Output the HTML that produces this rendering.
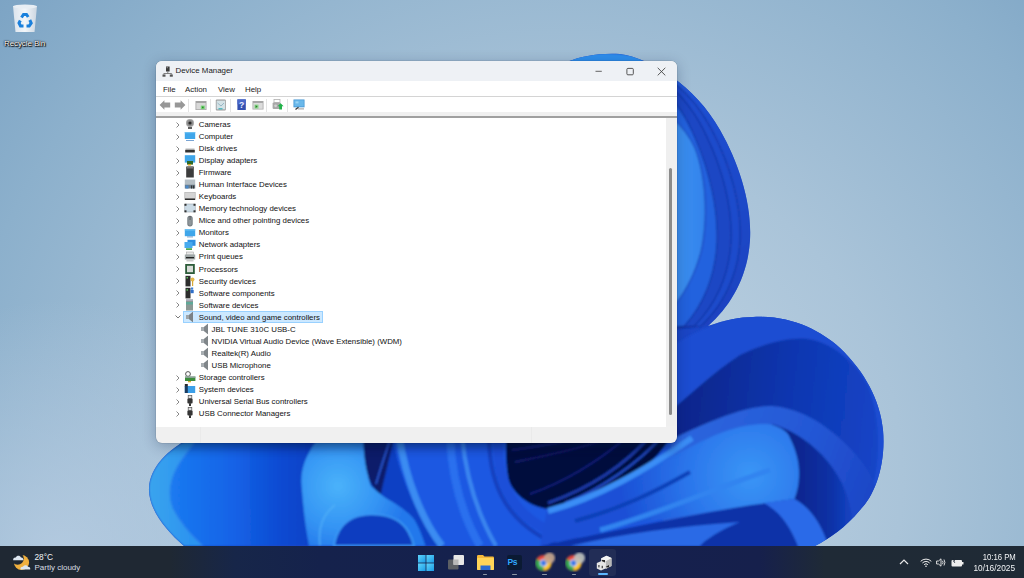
<!DOCTYPE html>
<html><head><meta charset="utf-8">
<style>
*{margin:0;padding:0;box-sizing:border-box}
html,body{width:1024px;height:578px;overflow:hidden}
body{position:relative;font-family:"Liberation Sans",sans-serif;background:#a0bcd4}
#bg{position:absolute;left:0;top:0}
.win{position:absolute;left:156px;top:61px;width:521px;height:382px;background:#f0f0f0;border-radius:6px;overflow:hidden;
box-shadow:0 3px 14px rgba(0,20,60,.28),0 0 0 0.6px rgba(0,0,0,.12)}
.title{position:absolute;left:0;top:0;width:521px;height:20px;background:#eef1f5}
.title .t{position:absolute;left:19.5px;top:0.3px;line-height:20px;font-size:7.9px;color:#1a1a1a}
.menu{position:absolute;left:0;top:20px;width:521px;height:16px;background:#fff;border-bottom:1px solid #d4d4d4}
.menu span{position:absolute;top:1px;line-height:15px;font-size:7.9px;color:#1a1a1a}
.tool{position:absolute;left:0;top:35.6px;width:521px;height:21px;background:linear-gradient(#fff 0,#fff 15.5px,#f0f0f0 15.5px,#f0f0f0 19.2px,#a0a0a0 19.2px)}
.tool svg{position:absolute}
.tsep{position:absolute;top:2px;width:1px;height:13px;background:#e4e4e4}
.tree{position:absolute;left:0;top:56.5px;width:510px;height:309px;background:#fff}
.sb{position:absolute;left:510px;top:56.5px;width:11px;height:308.5px;background:#efefef}
.thumb{position:absolute;left:512.5px;top:107px;width:3px;height:247px;background:#8b8b8b;border-radius:2px}
.row{position:absolute;height:12px;font-size:7.85px;color:#111;white-space:nowrap;line-height:12px}
.ico,.chev{position:absolute}
.sel{position:absolute;background:#cce8ff;border:1px solid #99d1ff}
.tt{position:absolute;font-size:8px;line-height:10px;color:#f2f4f6;white-space:nowrap}
.dot{position:absolute;top:573.5px;width:4.5px;height:1.6px;background:#8e98a6;border-radius:1px}
.taskbar{position:absolute;left:0;top:546px;width:1024px;height:32px;
background:linear-gradient(90deg,#1f2833 0px,#1f2833 170px,#172649 235px,#15224c 320px,#15204e 600px,#16204c 760px,#1f2a36 825px,#1f2a35 1024px)}
</style></head><body>
<svg id="bg" width="1024" height="578" viewBox="0 0 1024 578">
 <defs>
  <radialGradient id="bgG" gradientUnits="userSpaceOnUse" cx="560" cy="480" r="760">
   <stop offset="0" stop-color="#c6d8e6"/><stop offset="0.45" stop-color="#aac4d9"/><stop offset="0.8" stop-color="#8cb0cc"/><stop offset="1" stop-color="#7aa2c3"/>
  </radialGradient>
  <radialGradient id="bgHL" gradientUnits="userSpaceOnUse" cx="60" cy="560" r="260"><stop offset="0" stop-color="#b8cde2" stop-opacity="0.85"/><stop offset="1" stop-color="#b8cde2" stop-opacity="0"/></radialGradient>
  <linearGradient id="gTop" gradientUnits="userSpaceOnUse" x1="600" y1="55" x2="760" y2="300">
   <stop offset="0" stop-color="#2a80ea"/><stop offset="0.3" stop-color="#1f50d2"/><stop offset="1" stop-color="#1a42c0"/>
  </linearGradient>
  <linearGradient id="gLobe2" gradientUnits="userSpaceOnUse" x1="700" y1="320" x2="880" y2="520">
   <stop offset="0" stop-color="#2352d4"/><stop offset="1" stop-color="#1a3bb8"/>
  </linearGradient>
  <linearGradient id="gInner2" gradientUnits="userSpaceOnUse" x1="700" y1="380" x2="880" y2="400"><stop offset="0" stop-color="#0a2890"/><stop offset="0.5" stop-color="#0e36b0"/><stop offset="1" stop-color="#1444c6"/></linearGradient>
  <linearGradient id="gBand2" gradientUnits="userSpaceOnUse" x1="680" y1="430" x2="870" y2="500"><stop offset="0" stop-color="#2d66de"/><stop offset="0.6" stop-color="#2458d6"/><stop offset="1" stop-color="#1d46c6"/></linearGradient>
  <linearGradient id="gShade2" gradientUnits="userSpaceOnUse" x1="790" y1="0" x2="855" y2="0"><stop offset="0" stop-color="#08248a"/><stop offset="0.6" stop-color="#0e30a4"/><stop offset="1" stop-color="#1446c6"/></linearGradient>
  <linearGradient id="gDark2" gradientUnits="userSpaceOnUse" x1="690" y1="430" x2="860" y2="470">
   <stop offset="0" stop-color="#1e4ed0"/><stop offset="0.55" stop-color="#0f2c9c"/><stop offset="0.8" stop-color="#0a2488"/><stop offset="1" stop-color="#1838b4"/>
  </linearGradient>
  <radialGradient id="gLight2" gradientUnits="userSpaceOnUse" cx="750" cy="475" r="130">
   <stop offset="0" stop-color="#3a96f6"/><stop offset="0.45" stop-color="#2c78ec"/><stop offset="1" stop-color="#1a50d6"/>
  </radialGradient>
  <linearGradient id="gLeft" gradientUnits="userSpaceOnUse" x1="150" y1="0" x2="320" y2="0">
   <stop offset="0" stop-color="#2a8af2"/><stop offset="0.15" stop-color="#1a78f0"/><stop offset="0.5" stop-color="#1462e6"/><stop offset="0.8" stop-color="#0c48d0"/><stop offset="1" stop-color="#0a40c4"/>
  </linearGradient>
  <radialGradient id="gCurl" gradientUnits="userSpaceOnUse" cx="338" cy="486" r="70">
   <stop offset="0" stop-color="#4ab2fa"/><stop offset="0.6" stop-color="#3494f4"/><stop offset="1" stop-color="#2478ec"/>
  </radialGradient>
  <clipPath id="sil"><path d="M194 436 L540 436 L540 80 C555 65 580 52 620 54 C650 58 695 85 720 130 C740 165 752 205 750 240 C748 275 732 305 708 326 C725 320 740 317 753 317 C790 315 820 330 840 348 C865 372 880 400 883 430 C886 465 875 495 860 510 C845 528 830 538 815 546 L184 546 C165 530 148 508 149 488 C150 468 166 450 194 436 Z"/></clipPath>
  <linearGradient id="gPet" gradientUnits="userSpaceOnUse" x1="640" y1="0" x2="705" y2="0"><stop offset="0" stop-color="#4aa2f6"/><stop offset="1" stop-color="#3283ec"/></linearGradient>
  <linearGradient id="gShadow" x1="0" y1="0" x2="0" y2="1"><stop offset="0" stop-color="#000830" stop-opacity="0.45"/><stop offset="0.4" stop-color="#000830" stop-opacity="0.2"/><stop offset="1" stop-color="#000830" stop-opacity="0"/></linearGradient>
  <linearGradient id="gRim" gradientUnits="userSpaceOnUse" x1="150" y1="0" x2="190" y2="0"><stop offset="0" stop-color="#3aa4ee"/><stop offset="1" stop-color="#2c94f0"/></linearGradient>
  <filter id="shb" x="-10%" y="-100%" width="120%" height="300%"><feGaussianBlur stdDeviation="4"/></filter>
  <filter id="soft" x="-5%" y="-5%" width="110%" height="110%"><feGaussianBlur stdDeviation="1.2"/></filter>
 </defs>
 <rect width="1024" height="578" fill="url(#bgG)"/>
 <rect width="1024" height="578" fill="url(#bgHL)"/>
 <path d="M194 436 L540 436 L540 80 C555 65 580 52 620 54 C650 58 695 85 720 130 C740 165 752 205 750 240 C748 275 732 305 708 326 C725 320 740 317 753 317 C790 315 820 330 840 348 C865 372 880 400 883 430 C886 465 875 495 860 510 C845 528 830 538 815 546 L184 546 C165 530 148 508 149 488 C150 468 166 450 194 436 Z" fill="#1b46c6"/>
 <g clip-path="url(#sil)"><g filter="url(#soft)">
  <!-- top lobe -->
  <path d="M540 90 C552 68 578 55 602 55 C630 55 660 66 680 81 C700 96 712 113 722 132 C740 165 752 205 750 240 C748 275 732 305 708 326 L540 340 Z" fill="url(#gTop)"/>
  <path d="M540 90 C552 68 578 55 602 55 C630 55 660 66 680 81 C700 96 712 113 722 132 C740 165 752 205 750 240 C748 275 732 305 708 326 L540 340 Z" transform="translate(600 330) scale(0.933 0.99) translate(-600 -330)" fill="#1d4ccc" stroke="#12309c" stroke-width="1.07"/>
  <path d="M540 90 C552 68 578 55 602 55 C630 55 660 66 680 81 C700 96 712 113 722 132 C740 165 752 205 750 240 C748 275 732 305 708 326 L540 340 Z" transform="translate(600 330) scale(0.873 0.98) translate(-600 -330)" fill="#1a46c4" stroke="#12309c" stroke-width="1.15"/>
  <path d="M540 90 C552 68 578 55 602 55 C630 55 660 66 680 81 C700 96 712 113 722 132 C740 165 752 205 750 240 C748 275 732 305 708 326 L540 340 Z" transform="translate(600 330) scale(0.78 0.97) translate(-600 -330)" fill="#2462de" stroke="#12309c" stroke-width="1.28"/>
  <path d="M560 85 C620 82 675 105 695 148 C707 178 708 222 701 252 C695 274 686 290 677 302 C665 316 655 326 645 336 L560 336 Z" fill="url(#gPet)" stroke="#1838b0" stroke-width="1"/>
  <ellipse cx="601" cy="60" rx="42" ry="7" fill="#2e8eec"/>
  <!-- second lobe -->
  <path d="M650 360 C700 325 740 312 770 313 C820 315 870 360 885 420 C895 480 870 520 815 560 L600 560 Z" fill="#1c4ed2"/>
  <path d="M660 420 C690 395 712 373 740 355 C765 343 790 337 808 339 C830 342 855 360 868 386 C880 415 882 460 870 495 C855 530 830 545 800 560 L640 560 Z" fill="url(#gInner2)"/>
  <path d="M660 445 C700 425 745 405 772 406 C795 408 815 418 832 432 C855 450 870 470 877 490 C880 510 870 535 850 560 L660 560 Z" fill="url(#gBand2)"/>
  <path d="M772 424 C800 432 830 455 845 490 C855 515 855 540 850 560 L780 560 Z" fill="url(#gShade2)"/>
  <!-- bottom-left region -->
  <path d="M194 436 C166 450 150 468 149 488 C148 508 165 530 184 546 L480 546 L480 436 Z" fill="url(#gLeft)"/>
  <path d="M194 436 C166 450 150 468 149 488 C148 508 165 530 184 546 L203 546 C192 536 180 522 173 508 C168 495 170 480 178 466 C184 456 190 448 200 436 Z" fill="url(#gRim)"/>
  <path d="M200 436 C190 448 184 456 178 466 C170 480 168 495 173 508 C180 522 192 536 203 546" stroke="#2a80ec" stroke-width="1.2" fill="none"/>
  <path d="M315 443 C306 455 300 470 301.6 486 C303 505 305 525 309 546 L425.6 546 C422 535 418 525 414 519 C408 512 400 507 398.5 505.8 C390 500 385 498 383 496 C375 490 371 486 371 486 C368 478 365.5 467 364 436 L320 436 Z" fill="url(#gCurl)"/>
  <path d="M334 546 C336 532 342 521 358 516 C372 512 390 515 400 522 C408 528 412 538 414 546 Z" fill="#0b3cc0" stroke="#3a98f6" stroke-width="2"/>
  <path d="M320 546 C318 530 322 515 335 505" stroke="#58b8fa" stroke-width="1.5" fill="none" opacity="0.7"/>
  <path d="M363 436 L394 436 C390 458 384 478 381 494 C375 490 370 484 368 475 C365 465 364 455 363 436 Z" fill="#071a6a"/>
  <path d="M376 484 C380 470 385 455 390 440" stroke="#2a5ad8" stroke-width="1.6" fill="none"/>
  <path d="M392 436 L672 436 L660 546 L438 546 C420 520 400 480 392 436 Z" fill="#1c58e2"/>
  <path d="M399 436 C406 480 422 520 442 546" stroke="#3a8cf2" stroke-width="7" fill="none"/>
  <path d="M462 436 C466 478 478 515 496 546" stroke="#3a86f0" stroke-width="4" fill="none"/>
  <path d="M450 436 C452 480 462 515 480 546" stroke="#2a70ee" stroke-width="8" fill="none"/>
  <path d="M489 436 C489 490 510 525 560 546" stroke="#123fbe" stroke-width="4" fill="none"/>
  <path d="M498 436 C496 495 520 528 590 546" stroke="#1a50d8" stroke-width="10" fill="none"/>
  <path d="M506 436 L672 436 C665 445 660 455 643 468.5 C620 482 592 496 547 509 C525 505 510 490 508 476 C506 465 506 452 506 436 Z" fill="#06093c"/>
  <path d="M548 503 C590 488 625 465 650 436" stroke="#1a3aa8" stroke-width="3" fill="none"/>
  <path d="M565 503 C600 490 640 462 662 436" stroke="#2048c0" stroke-width="2.5" fill="none"/>
  <path d="M530 494 C570 480 600 460 628 436" stroke="#12268a" stroke-width="1.5" fill="none"/>
  <path d="M515 462 C550 455 590 446 615 436 M512 450 C540 446 570 441 590 436" stroke="#16247a" stroke-width="1.3" fill="none"/>
  <path d="M540 546 C600 533 686 516 751 505 C770 502 785 500 794 499 L810 560 L540 560 Z" fill="#0d30a8"/>
  <path d="M570 546 C620 534 680 526 740 522 C720 530 705 540 700 546 Z" fill="#2a6ae6"/>
  <path d="M547 509 C580 500 600 492 620 482 C640 472 652 466 665 460 C690 447 710 436 730 429.7 C750 424 765 423 773 425 C782 428 788 432 790 438 C796 450 799 462 799 473 C799 485 797 492 794.5 499 C780 501 765 503 751 505 C720 510 700 513 686.5 516 C650 520 620 526 600 533 C580 536 560 540 540 546 Z" fill="url(#gLight2)"/>
  <path d="M548 511 C600 497 645 470 692 438" stroke="#3a8ef6" stroke-width="6" fill="none"/>
  <path d="M575 521 C620 509 655 492 690 472" stroke="#1040b8" stroke-width="4" fill="none"/>
  <path d="M600 530 C655 515 705 492 770 470" stroke="#3184f0" stroke-width="5" fill="none"/>
  <path d="M764 503 C780 512 792 526 803 560 L832 560 C826 530 812 508 794.5 499 Z" fill="#2a6ae8"/>
 </g>
  <rect x="160" y="432" width="513" height="16" fill="#000a30" opacity="0.35" filter="url(#shb)"/>
 </g>
</svg>

<div class="win">
 <div class="title"><svg style="position:absolute;left:5.5px;top:4.5px" width="11" height="11" viewBox="0 0 11 11"><rect x="4" y="0.5" width="3.6" height="5" fill="#3a3a3a"/><rect x="4.6" y="1.2" width="1.2" height="1" fill="#aaa"/><path d="M5.8 5.5 L5.8 7.5 M1.8 7.5 L9.6 7.5 M1.8 7.5 L1.8 8.5 M9.6 7.5 L9.6 8.5" stroke="#666" stroke-width="0.8" fill="none"/><rect x="0.5" y="8.5" width="3" height="2.2" fill="#555"/><rect x="7.8" y="8.5" width="3" height="2.2" fill="#555"/></svg><span class="t">Device Manager</span><svg style="position:absolute;left:436px;top:6px" width="80" height="10" viewBox="0 0 80 10"><path d="M3.5 4.3 L9.8 4.3" stroke="#555" stroke-width="0.9"/><rect x="34.9" y="1.4" width="6.4" height="6.4" rx="1" fill="none" stroke="#444" stroke-width="0.9"/><path d="M65.7 0.8 L73.3 8.4 M73.3 0.8 L65.7 8.4" stroke="#444" stroke-width="0.9"/></svg></div>
 <div class="menu"><span style="left:7px">File</span><span style="left:29px">Action</span><span style="left:62px">View</span><span style="left:89px">Help</span></div>
 <div class="tool"><svg style="left:2.5px;top:2.6px" width="12" height="12" viewBox="0 0 12 12"><path d="M0.6 6 L5.4 1.2 L5.4 3.4 L11.2 3.4 L11.2 8.6 L5.4 8.6 L5.4 10.8 Z" fill="#979797"/></svg><svg style="left:17.8px;top:2.6px" width="12" height="12" viewBox="0 0 12 12"><path d="M11.4 6 L6.6 1.2 L6.6 3.4 L0.8 3.4 L0.8 8.6 L6.6 8.6 L6.6 10.8 Z" fill="#979797"/></svg><div class="tsep" style="left:32.4px"></div><svg style="left:38.5px;top:3.4px" width="12" height="12" viewBox="0 0 12 12"><rect x="0.5" y="1" width="11" height="9" fill="#a4a4a4"/><rect x="1.3" y="3" width="9.4" height="6.3" fill="#d8d8d8"/><rect x="5.8" y="5.6" width="4" height="3.6" fill="#7ad67a"/><rect x="7" y="6.6" width="1.6" height="1.6" fill="#2a8a2a"/></svg><div class="tsep" style="left:53.5px"></div><svg style="left:59.3px;top:2.4px" width="12" height="12" viewBox="0 0 12 12"><rect x="0.8" y="0.5" width="10" height="11" rx="1" fill="#9a9a9a"/><rect x="1.6" y="1.6" width="8.4" height="8.8" fill="#d4e2e6"/><path d="M2.5 4 L6 7 L9 4" stroke="#8ab" stroke-width="0.8" fill="none"/><rect x="3.5" y="9.2" width="4" height="1.2" fill="#3ab0b8"/></svg><div class="tsep" style="left:74.2px"></div><svg style="left:80px;top:2.4px" width="12" height="12" viewBox="0 0 12 12"><rect x="1.4" y="0.4" width="8.4" height="10.6" fill="#3350b0"/><rect x="1.4" y="0.4" width="8.4" height="5" fill="#4a68c8"/><text x="5.6" y="8.6" font-size="8.5" font-family="Liberation Sans" font-weight="bold" fill="#e8ecff" text-anchor="middle">?</text></svg><svg style="left:95.5px;top:3.3px" width="12" height="12" viewBox="0 0 12 12"><rect x="0.5" y="1" width="11" height="8.5" fill="#a8a8a8"/><rect x="1.3" y="3" width="9.4" height="5.8" fill="#dcdcdc"/><rect x="2.5" y="4.6" width="4" height="4" fill="#8ad68a"/><path d="M3.6 5.2 L5.6 6.6 L3.6 8 Z" fill="#2a7a2a"/></svg><div class="tsep" style="left:110.4px"></div><svg style="left:116px;top:2.8px" width="12" height="12" viewBox="0 0 12 12"><rect x="2" y="0.5" width="6" height="3" fill="none" stroke="#b0b0b0" stroke-width="0.8"/><rect x="0.6" y="3.5" width="8" height="6.5" rx="1" fill="#a8a8a8"/><circle cx="3.6" cy="6.8" r="1.4" fill="#d0d0d0"/><path d="M8.6 4.2 L11.6 7.2 L10 7.2 L10 10.6 L7.2 10.6 L7.2 7.2 L5.6 7.2 Z" fill="#22b24a"/></svg><div class="tsep" style="left:131px"></div><svg style="left:137.2px;top:2.8px" width="12" height="12" viewBox="0 0 12 12"><rect x="0.5" y="0.5" width="11" height="7.8" fill="#3a8fd0"/><rect x="1.2" y="1.2" width="9.6" height="6.4" fill="#6ab8ea"/><rect x="2.5" y="2.4" width="3" height="2" fill="#9ad4f4"/><path d="M5.5 8.3 L2.5 10.6" stroke="#333" stroke-width="1.2"/><rect x="5" y="9.4" width="6" height="1" fill="#999"/></svg></div>
 <div class="tree">
<svg class="chev" style="left:19px;top:3.20px" width="6" height="8" viewBox="0 0 6 8"><path d="M1.5 1.5 L4 4 L1.5 6.5" fill="none" stroke="#7a7a7a" stroke-width="0.9"/></svg><svg class="ico" style="left:28px;top:0.60px" width="12" height="12" viewBox="0 0 12 12"><circle cx="6" cy="5" r="4" fill="#a6a6a6"/><circle cx="6" cy="5" r="3" fill="#8c8c8c"/><circle cx="6" cy="5" r="1.6" fill="#2a2a2a"/><rect x="4" y="9.2" width="4" height="1.6" fill="#3a3a3a"/></svg><div class="row" style="left:42.8px;top:1.40px">Cameras</div>
<svg class="chev" style="left:19px;top:15.25px" width="6" height="8" viewBox="0 0 6 8"><path d="M1.5 1.5 L4 4 L1.5 6.5" fill="none" stroke="#7a7a7a" stroke-width="0.9"/></svg><svg class="ico" style="left:28px;top:12.65px" width="12" height="12" viewBox="0 0 12 12"><rect x="0.8" y="2" width="10.4" height="7" fill="#3fa6ea"/><rect x="0.8" y="2" width="10.4" height="1.2" fill="#6cc0f2"/><rect x="2" y="10" width="8" height="0.9" fill="#6a9ad0"/></svg><div class="row" style="left:42.8px;top:13.45px">Computer</div>
<svg class="chev" style="left:19px;top:27.30px" width="6" height="8" viewBox="0 0 6 8"><path d="M1.5 1.5 L4 4 L1.5 6.5" fill="none" stroke="#7a7a7a" stroke-width="0.9"/></svg><svg class="ico" style="left:28px;top:24.70px" width="12" height="12" viewBox="0 0 12 12"><rect x="1.5" y="6.5" width="9" height="1.6" fill="#b8b8b8"/><rect x="1.2" y="7.9" width="9.6" height="2.6" fill="#333"/></svg><div class="row" style="left:42.8px;top:25.50px">Disk drives</div>
<svg class="chev" style="left:19px;top:39.35px" width="6" height="8" viewBox="0 0 6 8"><path d="M1.5 1.5 L4 4 L1.5 6.5" fill="none" stroke="#7a7a7a" stroke-width="0.9"/></svg><svg class="ico" style="left:28px;top:36.75px" width="12" height="12" viewBox="0 0 12 12"><rect x="0.8" y="1.2" width="10.4" height="7.4" fill="#3fa6ea"/><rect x="3" y="7" width="6" height="3.6" fill="#2e6a2a"/><rect x="4" y="10" width="3" height="1.5" fill="#d6a020"/></svg><div class="row" style="left:42.8px;top:37.55px">Display adapters</div>
<svg class="chev" style="left:19px;top:51.40px" width="6" height="8" viewBox="0 0 6 8"><path d="M1.5 1.5 L4 4 L1.5 6.5" fill="none" stroke="#7a7a7a" stroke-width="0.9"/></svg><svg class="ico" style="left:28px;top:48.80px" width="12" height="12" viewBox="0 0 12 12"><rect x="2.2" y="0.5" width="7.6" height="11" fill="#3c3c3c"/><rect x="3" y="0.5" width="6" height="2" fill="#777"/></svg><div class="row" style="left:42.8px;top:49.60px">Firmware</div>
<svg class="chev" style="left:19px;top:63.45px" width="6" height="8" viewBox="0 0 6 8"><path d="M1.5 1.5 L4 4 L1.5 6.5" fill="none" stroke="#7a7a7a" stroke-width="0.9"/></svg><svg class="ico" style="left:28px;top:60.85px" width="12" height="12" viewBox="0 0 12 12"><rect x="0.8" y="1.5" width="10.4" height="5" fill="#b4bec4"/><rect x="0.8" y="6.5" width="10.4" height="4" fill="#6c7f8c"/><rect x="1.5" y="7.5" width="3" height="3" fill="#4a88c8"/><rect x="7" y="7.5" width="1.2" height="3" fill="#333"/><rect x="9" y="7.5" width="1.2" height="3" fill="#333"/></svg><div class="row" style="left:42.8px;top:61.65px">Human Interface Devices</div>
<svg class="chev" style="left:19px;top:75.50px" width="6" height="8" viewBox="0 0 6 8"><path d="M1.5 1.5 L4 4 L1.5 6.5" fill="none" stroke="#7a7a7a" stroke-width="0.9"/></svg><svg class="ico" style="left:28px;top:72.90px" width="12" height="12" viewBox="0 0 12 12"><rect x="0.8" y="2.5" width="10.4" height="6" fill="#d4d4d4" stroke="#a8a8a8" stroke-width="0.6"/><rect x="0.8" y="8.5" width="10.4" height="1.5" fill="#2e2e2e"/></svg><div class="row" style="left:42.8px;top:73.70px">Keyboards</div>
<svg class="chev" style="left:19px;top:87.55px" width="6" height="8" viewBox="0 0 6 8"><path d="M1.5 1.5 L4 4 L1.5 6.5" fill="none" stroke="#7a7a7a" stroke-width="0.9"/></svg><svg class="ico" style="left:28px;top:84.95px" width="12" height="12" viewBox="0 0 12 12"><rect x="0.8" y="2" width="10.4" height="8" fill="#cbdbe6" stroke="#8a98a2" stroke-width="0.5"/><rect x="0.5" y="1.8" width="2" height="2" fill="#333"/><rect x="9.5" y="1.8" width="2" height="2" fill="#333"/><rect x="0.5" y="8.3" width="2" height="2" fill="#333"/><rect x="9.5" y="8.3" width="2" height="2" fill="#333"/></svg><div class="row" style="left:42.8px;top:85.75px">Memory technology devices</div>
<svg class="chev" style="left:19px;top:99.60px" width="6" height="8" viewBox="0 0 6 8"><path d="M1.5 1.5 L4 4 L1.5 6.5" fill="none" stroke="#7a7a7a" stroke-width="0.9"/></svg><svg class="ico" style="left:28px;top:97.00px" width="12" height="12" viewBox="0 0 12 12"><rect x="3.3" y="0.8" width="5.4" height="10.6" rx="2.7" fill="#737b80"/><rect x="4.3" y="1.8" width="3.4" height="8.6" rx="1.7" fill="#8e969a"/><rect x="5.7" y="1" width="0.7" height="4" fill="#444"/></svg><div class="row" style="left:42.8px;top:97.80px">Mice and other pointing devices</div>
<svg class="chev" style="left:19px;top:111.65px" width="6" height="8" viewBox="0 0 6 8"><path d="M1.5 1.5 L4 4 L1.5 6.5" fill="none" stroke="#7a7a7a" stroke-width="0.9"/></svg><svg class="ico" style="left:28px;top:109.05px" width="12" height="12" viewBox="0 0 12 12"><rect x="0.8" y="2.2" width="10.4" height="7" fill="#3fa6ea"/><rect x="0.8" y="2.2" width="10.4" height="1.3" fill="#70c4f4"/><rect x="3" y="9.4" width="6" height="1" fill="#7aa0c8"/></svg><div class="row" style="left:42.8px;top:109.85px">Monitors</div>
<svg class="chev" style="left:19px;top:123.70px" width="6" height="8" viewBox="0 0 6 8"><path d="M1.5 1.5 L4 4 L1.5 6.5" fill="none" stroke="#7a7a7a" stroke-width="0.9"/></svg><svg class="ico" style="left:28px;top:121.10px" width="12" height="12" viewBox="0 0 12 12"><rect x="3.5" y="0.8" width="8" height="6" fill="#2f8fe0"/><rect x="0.5" y="3" width="8" height="6" fill="#47aaee"/><rect x="2" y="9.3" width="6" height="1.6" fill="#3aa040"/></svg><div class="row" style="left:42.8px;top:121.90px">Network adapters</div>
<svg class="chev" style="left:19px;top:135.75px" width="6" height="8" viewBox="0 0 6 8"><path d="M1.5 1.5 L4 4 L1.5 6.5" fill="none" stroke="#7a7a7a" stroke-width="0.9"/></svg><svg class="ico" style="left:28px;top:133.15px" width="12" height="12" viewBox="0 0 12 12"><rect x="2.5" y="1" width="7" height="3" fill="#e8e8e8" stroke="#999" stroke-width="0.5"/><rect x="0.8" y="3.5" width="10.4" height="5" fill="#a0a8a8"/><rect x="2" y="6" width="8" height="1.3" fill="#222"/><rect x="2.5" y="8.5" width="7" height="2" fill="#ccc"/></svg><div class="row" style="left:42.8px;top:133.95px">Print queues</div>
<svg class="chev" style="left:19px;top:147.80px" width="6" height="8" viewBox="0 0 6 8"><path d="M1.5 1.5 L4 4 L1.5 6.5" fill="none" stroke="#7a7a7a" stroke-width="0.9"/></svg><svg class="ico" style="left:28px;top:145.20px" width="12" height="12" viewBox="0 0 12 12"><rect x="1.2" y="1" width="9.6" height="10" fill="#2d5c3a"/><rect x="3" y="2.8" width="6" height="6.4" fill="#d8dcd8"/></svg><div class="row" style="left:42.8px;top:146.00px">Processors</div>
<svg class="chev" style="left:19px;top:159.85px" width="6" height="8" viewBox="0 0 6 8"><path d="M1.5 1.5 L4 4 L1.5 6.5" fill="none" stroke="#7a7a7a" stroke-width="0.9"/></svg><svg class="ico" style="left:28px;top:157.25px" width="12" height="12" viewBox="0 0 12 12"><rect x="1.5" y="0.8" width="5" height="10.6" fill="#2c2c2c"/><rect x="2.5" y="2" width="1.5" height="1.5" fill="#5ac05a"/><circle cx="8.5" cy="4.5" r="2" fill="#e4b84a"/><rect x="8" y="6" width="1.2" height="5" fill="#d8a838"/></svg><div class="row" style="left:42.8px;top:158.05px">Security devices</div>
<svg class="chev" style="left:19px;top:171.90px" width="6" height="8" viewBox="0 0 6 8"><path d="M1.5 1.5 L4 4 L1.5 6.5" fill="none" stroke="#7a7a7a" stroke-width="0.9"/></svg><svg class="ico" style="left:28px;top:169.30px" width="12" height="12" viewBox="0 0 12 12"><rect x="1.5" y="0.8" width="5" height="10.6" fill="#2c2c2c"/><rect x="2.5" y="2.2" width="1.5" height="1.5" fill="#5ac05a"/><rect x="7" y="0.5" width="2.2" height="2.2" fill="#3a7fd8"/><rect x="6.5" y="3" width="3.2" height="3.2" fill="#2f6fc8"/></svg><div class="row" style="left:42.8px;top:170.10px">Software components</div>
<svg class="chev" style="left:19px;top:183.95px" width="6" height="8" viewBox="0 0 6 8"><path d="M1.5 1.5 L4 4 L1.5 6.5" fill="none" stroke="#7a7a7a" stroke-width="0.9"/></svg><svg class="ico" style="left:28px;top:181.35px" width="12" height="12" viewBox="0 0 12 12"><rect x="2" y="0.5" width="7" height="11" fill="#8c9894"/><rect x="2" y="3" width="7" height="2.5" fill="#5fa898"/><rect x="2" y="0.5" width="7" height="1.5" fill="#aab"/></svg><div class="row" style="left:42.8px;top:182.15px">Software devices</div>
<div class="sel" style="left:27px;top:193.30px;width:139.5px;height:12.2px"></div><svg class="chev" style="left:18px;top:196.40px" width="8" height="6" viewBox="0 0 8 6"><path d="M1.5 1.5 L4 4 L6.5 1.5" fill="none" stroke="#6a6a6a" stroke-width="0.9"/></svg><svg class="ico" style="left:28px;top:193.40px" width="12" height="12" viewBox="0 0 12 12"><path d="M2 4 L5 4 L9 0.8 L9 11.2 L5 8 L2 8 Z" fill="#9ea4a8"/><path d="M5 4 L9 0.8 L9 11.2 L5 8 Z" fill="#7c8286"/></svg><div class="row" style="left:42.8px;top:194.20px">Sound, video and game controllers</div>
<svg class="ico" style="left:42.5px;top:205.45px" width="12" height="12" viewBox="0 0 12 12"><path d="M2 4 L5 4 L9 0.8 L9 11.2 L5 8 L2 8 Z" fill="#a8aeb2"/><path d="M5 4 L9 0.8 L9 11.2 L5 8 Z" fill="#80868a"/></svg><div class="row" style="left:55.5px;top:206.25px">JBL TUNE 310C USB-C</div>
<svg class="ico" style="left:42.5px;top:217.50px" width="12" height="12" viewBox="0 0 12 12"><path d="M2 4 L5 4 L9 0.8 L9 11.2 L5 8 L2 8 Z" fill="#a8aeb2"/><path d="M5 4 L9 0.8 L9 11.2 L5 8 Z" fill="#80868a"/></svg><div class="row" style="left:55.5px;top:218.30px">NVIDIA Virtual Audio Device (Wave Extensible) (WDM)</div>
<svg class="ico" style="left:42.5px;top:229.55px" width="12" height="12" viewBox="0 0 12 12"><path d="M2 4 L5 4 L9 0.8 L9 11.2 L5 8 L2 8 Z" fill="#a8aeb2"/><path d="M5 4 L9 0.8 L9 11.2 L5 8 Z" fill="#80868a"/></svg><div class="row" style="left:55.5px;top:230.35px">Realtek(R) Audio</div>
<svg class="ico" style="left:42.5px;top:241.60px" width="12" height="12" viewBox="0 0 12 12"><path d="M2 4 L5 4 L9 0.8 L9 11.2 L5 8 L2 8 Z" fill="#a8aeb2"/><path d="M5 4 L9 0.8 L9 11.2 L5 8 Z" fill="#80868a"/></svg><div class="row" style="left:55.5px;top:242.40px">USB Microphone</div>
<svg class="chev" style="left:19px;top:256.25px" width="6" height="8" viewBox="0 0 6 8"><path d="M1.5 1.5 L4 4 L1.5 6.5" fill="none" stroke="#7a7a7a" stroke-width="0.9"/></svg><svg class="ico" style="left:28px;top:253.65px" width="12" height="12" viewBox="0 0 12 12"><circle cx="4" cy="3" r="2.4" fill="none" stroke="#555" stroke-width="1"/><rect x="1" y="5.5" width="10.4" height="4.5" fill="#3c8c3c"/><rect x="1" y="5.5" width="10.4" height="1.2" fill="#aab"/><rect x="4" y="10" width="3" height="1.3" fill="#d8b030"/></svg><div class="row" style="left:42.8px;top:254.45px">Storage controllers</div>
<svg class="chev" style="left:19px;top:268.30px" width="6" height="8" viewBox="0 0 6 8"><path d="M1.5 1.5 L4 4 L1.5 6.5" fill="none" stroke="#7a7a7a" stroke-width="0.9"/></svg><svg class="ico" style="left:28px;top:265.70px" width="12" height="12" viewBox="0 0 12 12"><rect x="0.8" y="1" width="3" height="2.5" fill="#2a2a2a"/><rect x="0.8" y="3" width="10.4" height="7" fill="#3b9fe8"/><rect x="0.8" y="3" width="3" height="7" fill="#1c3c60"/></svg><div class="row" style="left:42.8px;top:266.50px">System devices</div>
<svg class="chev" style="left:19px;top:280.35px" width="6" height="8" viewBox="0 0 6 8"><path d="M1.5 1.5 L4 4 L1.5 6.5" fill="none" stroke="#7a7a7a" stroke-width="0.9"/></svg><svg class="ico" style="left:28px;top:277.75px" width="12" height="12" viewBox="0 0 12 12"><rect x="4.2" y="0.6" width="3.6" height="2.8" fill="#ddd" stroke="#555" stroke-width="0.7"/><rect x="3.4" y="3.4" width="5.2" height="5" rx="1" fill="#353535"/><rect x="5" y="8.2" width="2" height="2.8" fill="#353535"/></svg><div class="row" style="left:42.8px;top:278.55px">Universal Serial Bus controllers</div>
<svg class="chev" style="left:19px;top:292.40px" width="6" height="8" viewBox="0 0 6 8"><path d="M1.5 1.5 L4 4 L1.5 6.5" fill="none" stroke="#7a7a7a" stroke-width="0.9"/></svg><svg class="ico" style="left:28px;top:289.80px" width="12" height="12" viewBox="0 0 12 12"><rect x="4.2" y="0.6" width="3.6" height="2.8" fill="#ddd" stroke="#555" stroke-width="0.7"/><rect x="3.4" y="3.4" width="5.2" height="5" rx="1" fill="#353535"/><rect x="5" y="8.2" width="2" height="2.8" fill="#353535"/></svg><div class="row" style="left:42.8px;top:290.60px">USB Connector Managers</div>
 </div>
 <div class="sb"></div>
 <div style="position:absolute;left:44px;top:366px;width:1px;height:16px;background:#eaeaea"></div><div style="position:absolute;left:374.5px;top:366px;width:1px;height:16px;background:#eaeaea"></div>
 <div class="thumb"></div>
</div>
<div class="taskbar"></div>
<svg width="0" height="0" style="position:absolute"><defs><filter id="cb"><feGaussianBlur stdDeviation="0.55"/></filter></defs></svg>
<svg style="position:absolute;left:12px;top:552.5px" width="19" height="18" viewBox="0 0 19 18"><circle cx="9.5" cy="9.5" r="7.6" fill="#f0b03e"/><circle cx="5.6" cy="5.6" r="6.2" fill="#1f2833"/><path d="M1.2 7.2 C0.8 5.4 2.2 4.2 3.8 4.5 C4.5 2.3 8 2 9 4.4 C10.8 4.3 11.8 5.8 11.3 7.2 Z" fill="#dde6f0"/><path d="M8.5 16.5 C8 14.6 9.5 13.4 11 13.7 C11.8 11.8 15.2 11.6 16 13.8 C17.8 13.8 18.6 15.2 18.2 16.5 Z" fill="#dce6f0"/></svg><div class="tt" style="left:34.5px;top:552.3px;font-size:8.3px">28°C</div><div class="tt" style="left:34.5px;top:562.5px;color:#d8dde2">Partly cloudy</div><svg style="position:absolute;left:417.5px;top:554.8px" width="16" height="16" viewBox="0 0 16 16"><defs><linearGradient id="wl" x1="0" y1="0" x2="1" y2="1"><stop offset="0" stop-color="#5fd4fa"/><stop offset="1" stop-color="#1a9be6"/></linearGradient></defs><rect x="0" y="0" width="7.6" height="7.6" fill="url(#wl)"/><rect x="8.4" y="0" width="7.6" height="7.6" fill="url(#wl)"/><rect x="0" y="8.4" width="7.6" height="7.6" fill="url(#wl)"/><rect x="8.4" y="8.4" width="7.6" height="7.6" fill="url(#wl)"/></svg><svg style="position:absolute;left:447.5px;top:554.8px" width="17" height="15" viewBox="0 0 17 15"><rect x="0" y="4.5" width="10.5" height="10" rx="1" fill="#5c5f64"/><rect x="5.5" y="0" width="10.5" height="10" rx="1" fill="#e6e6e6"/><rect x="5.5" y="4.5" width="5" height="5.5" fill="#b8b8b8"/></svg><svg style="position:absolute;left:476.8px;top:555.4px" width="17" height="15" viewBox="0 0 17 15"><path d="M0 1.2 Q0 0 1.2 0 L6 0 L7.5 1.5 L15.8 1.5 Q17 1.5 17 2.7 L17 13.8 Q17 15 15.8 15 L1.2 15 Q0 15 0 13.8 Z" fill="#f4b83a"/><rect x="0" y="3" width="17" height="12" rx="1" fill="#ffd458"/><rect x="3.5" y="10.5" width="10" height="4.5" fill="#2a6ad0"/></svg><div class="dot" style="left:482.7px"></div><div style="position:absolute;left:506.5px;top:554.5px;width:15.5px;height:15px;background:#0b1a33;border-radius:2px"></div><div style="position:absolute;left:507.5px;top:555px;font-size:8.5px;line-height:14px;font-weight:bold;color:#31a8ff;letter-spacing:-0.3px">Ps</div><div class="dot" style="left:512px"></div><svg style="position:absolute;left:535px;top:552px" width="21" height="20" viewBox="0 0 21 20"><defs><filter id="cb535" x="-20%" y="-20%" width="140%" height="140%"><feGaussianBlur stdDeviation="0.9"/></filter></defs><g filter="url(#cb535)"><circle cx="8.5" cy="11" r="8" fill="#e0443a"/><path d="M8.5 11 L15.43 7 A8 8 0 0 1 8.5 19 Z" fill="#f6c026"/><path d="M8.5 11 L8.5 19 A8 8 0 0 1 1.57 7 Z" fill="#2fa84f"/><circle cx="8.5" cy="11" r="3.8" fill="#fff"/><circle cx="8.5" cy="11" r="3" fill="#3b78e7"/><circle cx="14.5" cy="6" r="5.5" fill="#c8a890" opacity="0.9"/></g></svg><div class="dot" style="left:542px"></div><svg style="position:absolute;left:564.5px;top:552px" width="21" height="20" viewBox="0 0 21 20"><defs><filter id="cb564" x="-20%" y="-20%" width="140%" height="140%"><feGaussianBlur stdDeviation="0.9"/></filter></defs><g filter="url(#cb564)"><circle cx="8.5" cy="11" r="8" fill="#e0443a"/><path d="M8.5 11 L15.43 7 A8 8 0 0 1 8.5 19 Z" fill="#f6c026"/><path d="M8.5 11 L8.5 19 A8 8 0 0 1 1.57 7 Z" fill="#2fa84f"/><circle cx="8.5" cy="11" r="3.8" fill="#fff"/><circle cx="8.5" cy="11" r="3" fill="#3b78e7"/><circle cx="14.5" cy="6" r="5.5" fill="#c0c4c0" opacity="0.9"/></g></svg><div class="dot" style="left:571.5px"></div><div style="position:absolute;left:589px;top:549px;width:27px;height:27px;background:#222d56;border-radius:3px"></div><svg style="position:absolute;left:595.5px;top:554.5px" width="17" height="16" viewBox="0 0 17 16"><path d="M5 3.5 L10.5 0.8 L15.5 3 L15.5 11 L10 13.8 L5 11.5 Z" fill="#dcdcdc"/><path d="M10 6 L15.5 3 L15.5 11 L10 13.8 Z" fill="#b8b8b8"/><path d="M5 3.5 L10.5 0.8 L15.5 3 L10 6 Z" fill="#f4f4f4"/><rect x="5.8" y="5" width="3.2" height="3.6" fill="#2a2a2a"/><path d="M0.8 8 L5.5 6 L9.5 7.8 L9.5 13.5 L5 15.5 L0.8 13.5 Z" fill="#e6e6e6"/><rect x="2.2" y="10" width="1.4" height="2.4" fill="#555"/><rect x="5.6" y="10.8" width="1.4" height="2.4" fill="#555"/><path d="M9.5 12 L13 12.5 L13 10" fill="#222"/></svg><div style="position:absolute;left:598px;top:573.4px;width:10px;height:1.6px;background:#5cb6ff;border-radius:1px"></div><svg style="position:absolute;left:899px;top:559px" width="10" height="6" viewBox="0 0 10 6"><path d="M1 5 L5 1 L9 5" fill="none" stroke="#e8e8e8" stroke-width="1.2"/></svg><svg style="position:absolute;left:919.5px;top:557.5px" width="12" height="9" viewBox="0 0 12 9"><path d="M0.7 3.3 A7.5 7.5 0 0 1 11.3 3.3 M2.4 5 A5 5 0 0 1 9.6 5 M4.1 6.7 A2.6 2.6 0 0 1 7.9 6.7" fill="none" stroke="#eee" stroke-width="1"/><circle cx="6" cy="8.2" r="0.8" fill="#eee"/></svg><svg style="position:absolute;left:935.5px;top:558px" width="10" height="9" viewBox="0 0 10 9"><path d="M0.6 3 L2.5 3 L5 0.8 L5 8.2 L2.5 6 L0.6 6 Z" fill="none" stroke="#eee" stroke-width="0.9"/><path d="M6.5 2.8 Q7.6 4.5 6.5 6.2 M8 1.5 Q9.8 4.5 8 7.5" fill="none" stroke="#eee" stroke-width="0.9"/></svg><svg style="position:absolute;left:951px;top:557.5px" width="13" height="9" viewBox="0 0 13 9"><rect x="0.5" y="2" width="10.5" height="6.5" rx="1" fill="#eee"/><rect x="11" y="4" width="1.5" height="2.5" fill="#eee"/><path d="M2 0.3 L3.5 2.8 L2.5 2.8 L3.8 4.8" stroke="#1e2733" stroke-width="0.9" fill="none"/></svg><div class="tt" style="right:8.6px;top:552.3px;font-size:8.6px;transform:scaleX(0.9);transform-origin:right center">10:16 PM</div><div class="tt" style="right:8.6px;top:562.7px;font-size:8.6px;transform:scaleX(0.966);transform-origin:right center">10/16/2025</div>
<svg style="position:absolute;left:12px;top:4px" width="26" height="29" viewBox="0 0 26 29"><defs><linearGradient id="rb" x1="0" y1="0" x2="1" y2="0"><stop offset="0" stop-color="#dfe6ee"/><stop offset="0.5" stop-color="#f8fafc"/><stop offset="1" stop-color="#cfd8e2"/></linearGradient></defs><path d="M1 2 L25 2 L22.5 28 L3.5 28 Z" fill="url(#rb)" opacity="0.95"/><ellipse cx="13" cy="2.5" rx="12" ry="2" fill="#e8eef4"/><g fill="none" stroke="#1a80dc" stroke-width="3"><path d="M9.5 13.5 L11.5 10.5 L14.5 10.5 L16.2 13"/><path d="M17.8 16 L19.2 19 L17.2 22 L14.5 22"/><path d="M11.5 22 L8.5 22 L7 19 L8.3 16.5"/></g></svg><div style="position:absolute;left:4px;top:39px;font-size:8px;line-height:10px;color:#fff;text-shadow:0 0 2px #000,0 0 1px #000,1px 1px 1px #000;letter-spacing:-0.1px">Recycle Bin</div>
</body></html>
